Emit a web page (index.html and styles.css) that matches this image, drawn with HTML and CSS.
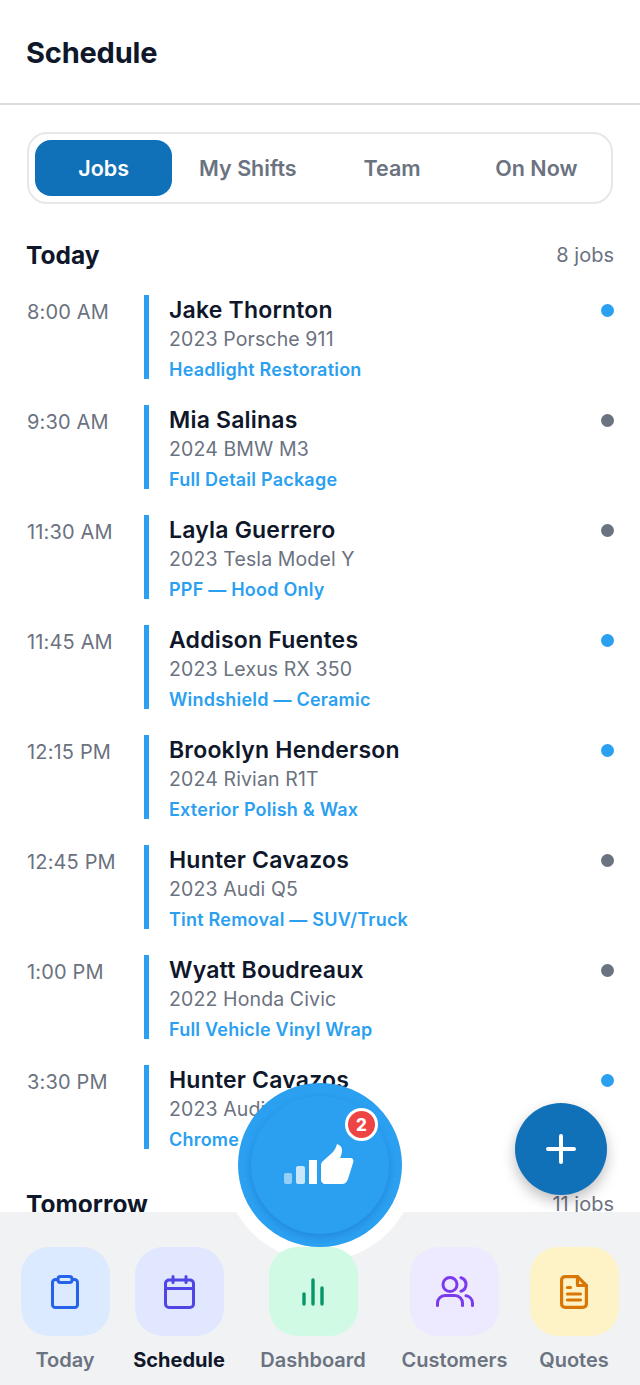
FILE: index.html
```html
<!DOCTYPE html>
<html lang="en">
<head>
  <meta charset="UTF-8">
  <title>Schedule</title>
  <link rel="stylesheet" href="styles.css">
</head>
<body>
  <div class="app">
    <header class="topbar">
      <h1>Schedule</h1>
    </header>

    <main class="content">
      <div class="tabs">
        <div class="tab active">Jobs</div>
        <div class="tab">My Shifts</div>
        <div class="tab">Team</div>
        <div class="tab">On Now</div>
      </div>

      <div class="day-head">
        <h2>Today</h2>
        <span>8 jobs</span>
      </div>

      <div class="job">
        <div class="time">8:00 AM</div>
        <div class="info">
          <div class="name">Jake Thornton</div>
          <div class="car">2023 Porsche 911</div>
          <div class="service">Headlight Restoration</div>
        </div>
        <div class="dot blue"></div>
      </div>
      <div class="job">
        <div class="time">9:30 AM</div>
        <div class="info">
          <div class="name">Mia Salinas</div>
          <div class="car">2024 BMW M3</div>
          <div class="service">Full Detail Package</div>
        </div>
        <div class="dot gray"></div>
      </div>
      <div class="job">
        <div class="time">11:30 AM</div>
        <div class="info">
          <div class="name">Layla Guerrero</div>
          <div class="car">2023 Tesla Model Y</div>
          <div class="service">PPF — Hood Only</div>
        </div>
        <div class="dot gray"></div>
      </div>
      <div class="job">
        <div class="time">11:45 AM</div>
        <div class="info">
          <div class="name">Addison Fuentes</div>
          <div class="car">2023 Lexus RX 350</div>
          <div class="service">Windshield — Ceramic</div>
        </div>
        <div class="dot blue"></div>
      </div>
      <div class="job">
        <div class="time">12:15 PM</div>
        <div class="info">
          <div class="name">Brooklyn Henderson</div>
          <div class="car">2024 Rivian R1T</div>
          <div class="service">Exterior Polish &amp; Wax</div>
        </div>
        <div class="dot blue"></div>
      </div>
      <div class="job">
        <div class="time">12:45 PM</div>
        <div class="info">
          <div class="name">Hunter Cavazos</div>
          <div class="car">2023 Audi Q5</div>
          <div class="service">Tint Removal — SUV/Truck</div>
        </div>
        <div class="dot gray"></div>
      </div>
      <div class="job">
        <div class="time">1:00 PM</div>
        <div class="info">
          <div class="name">Wyatt Boudreaux</div>
          <div class="car">2022 Honda Civic</div>
          <div class="service">Full Vehicle Vinyl Wrap</div>
        </div>
        <div class="dot gray"></div>
      </div>
      <div class="job">
        <div class="time">3:30 PM</div>
        <div class="info">
          <div class="name">Hunter Cavazos</div>
          <div class="car">2023 Audi Q7</div>
          <div class="service">Chrome Delete</div>
        </div>
        <div class="dot blue"></div>
      </div>

      <div class="day-head tomorrow">
        <h2>Tomorrow</h2>
        <span>11 jobs</span>
      </div>
    </main>

    <nav class="bottom-nav">
      <div class="nav-item">
        <div class="tile tile-today">
          <svg width="28" height="34" viewBox="0 0 28 34" fill="none" stroke="#2563eb" stroke-width="3" stroke-linejoin="round">
            <path d="M7 4.500H4.500a3 3 0 0 0-3 3v21.500a3 3 0 0 0 3 3.500h19a3 3 0 0 0 3-3.500V7.500a3 3 0 0 0-3-3H21"/>
            <rect x="7" y="1.500" width="14" height="6" rx="2.500"/>
          </svg>
        </div>
        <span>Today</span>
      </div>
      <div class="nav-item current">
        <div class="tile tile-schedule">
          <svg width="31" height="34" viewBox="0 0 31 34" fill="none" stroke="#4f46e5" stroke-width="3" stroke-linecap="round" stroke-linejoin="round">
            <rect x="1.500" y="5" width="28" height="27.500" rx="3.500"/>
            <path d="M1.500 13.500h28M9 1.500v6M22 1.500v6"/>
          </svg>
        </div>
        <span>Schedule</span>
      </div>
      <div class="nav-item">
        <div class="tile tile-dash">
          <svg width="22" height="28" viewBox="0 0 22 28" fill="none" stroke="#059669" stroke-width="3.400" stroke-linecap="round">
            <path d="M2 16v10M11 2v24M20 10v16"/>
          </svg>
        </div>
        <span>Dashboard</span>
      </div>
      <div class="nav-item">
        <div class="tile tile-cust">
          <svg width="38" height="31" viewBox="0 0 38 31" fill="none" stroke="#7c3aed" stroke-width="3" stroke-linecap="round">
            <circle cx="14" cy="8.500" r="7"/>
            <path d="M25 1.800a7 7 0 0 1 0 13.400"/>
            <path d="M1.500 29.500v-2.500a7.500 7.500 0 0 1 7.500-7.500h10a7.500 7.500 0 0 1 7.500 7.500v2.500"/>
            <path d="M30 19.800a7.500 7.500 0 0 1 6.500 7.200v2.500"/>
          </svg>
        </div>
        <span>Customers</span>
      </div>
      <div class="nav-item">
        <div class="tile tile-quotes">
          <svg width="28" height="34" viewBox="0 0 28 34" fill="none" stroke="#d97706" stroke-width="3.200" stroke-linecap="round" stroke-linejoin="round">
            <path d="M17.500 1.600H5A3.400 3.400 0 0 0 1.600 5v24A3.400 3.400 0 0 0 5 32.400h18a3.400 3.400 0 0 0 3.400-3.400V10.500z"/>
            <path d="M17.500 1.600v8.900h8.900"/>
            <path d="M7.500 12.500h3M7.500 19h13M7.500 25h13"/>
          </svg>
        </div>
        <span>Quotes</span>
      </div>
    </nav>

    <button class="fab" type="button">
      <svg width="30" height="30" viewBox="0 0 30 30" fill="none" stroke="#fff" stroke-width="4" stroke-linecap="round">
        <path d="M15 2v26M2 15h26"/>
      </svg>
    </button>

    <div class="hub">
      <div class="hub-inner">
        <svg width="70" height="41" viewBox="0 0 70 41" fill="#fff">
          <rect x="0" y="29" width="8" height="11" rx="2" opacity="0.5"/>
          <rect x="12" y="22" width="9" height="18" rx="2" opacity="0.75"/>
          <rect x="25" y="16" width="8" height="24"/>
          <path d="M37 21c0-2 1-3 2-4l9-8c2-2 4-5 5-9 3 1 5 3 5 6 0 3-1 6-2 8h10c3 0 4 2 3 5l-5 16c-1 3-3 5-6 5H41c-2 0-4-2-4-4z"/>
        </svg>
        <div class="badge">2</div>
      </div>
    </div>
  </div>
</body>
</html>
```
FILE: styles.css
```css
* {
  box-sizing: border-box;
}

body {
  margin: 0;
  font-family: Inter, "Liberation Sans", sans-serif;
  background: #fff;
  color: #0f172a;
}

.app {
  position: relative;
  width: 640px;
  height: 1385px;
  display: flex;
  flex-direction: column;
  overflow: hidden;
}

.topbar {
  height: 105px;
  flex: none;
  padding: 0 26px;
  display: flex;
  align-items: center;
  border-bottom: 2px solid #d9dbdf;
}

.topbar h1 {
  margin: 2px 0 0;
  font-size: 29px;
  font-weight: 700;
  letter-spacing: -0.2px;
}

.content {
  flex: 1;
  min-height: 0;
  overflow: hidden;
  padding: 27px 26px 0;
}

.tabs {
  height: 72px;
  margin: 0 1px;
  padding: 6px 6px;
  display: grid;
  grid-template-columns: repeat(4, 1fr);
  gap: 7px;
  border: 2px solid #e5e7eb;
  border-radius: 20px;
}

.tab {
  display: flex;
  align-items: center;
  justify-content: center;
  border-radius: 16px;
  font-size: 21.5px;
  font-weight: 600;
  color: #6b7280;
}

.tab.active {
  background: #1071b8;
  color: #fff;
}

.day-head {
  display: flex;
  justify-content: space-between;
  align-items: center;
  height: 36px;
  margin-top: 33px;
  margin-bottom: 22px;
}

.day-head h2 {
  margin: 0;
  font-size: 24.5px;
  font-weight: 700;
}

.day-head span {
  font-size: 20px;
  color: #6b7280;
}

.job {
  display: flex;
  height: 84px;
  margin-bottom: 26px;
}

.time {
  width: 118px;
  flex: none;
  padding: 5px 0 0 1px;
  font-size: 20px;
  letter-spacing: 0.15px;
  line-height: 25px;
  color: #6b7280;
}

.info {
  flex: 1;
  padding-left: 20px;
  border-left: 5px solid #2b9ff0;
}

.name {
  font-size: 23px;
  letter-spacing: 0.2px;
  line-height: 30px;
  font-weight: 600;
}

.car {
  font-size: 19.5px;
  letter-spacing: 0.12px;
  line-height: 28px;
  color: #6b7280;
}

.service {
  margin-top: 4px;
  font-size: 18px;
  letter-spacing: 0.22px;
  line-height: 26px;
  font-weight: 600;
  color: #2b9ff0;
}

.dot {
  width: 13px;
  height: 13px;
  margin-top: 9px;
  border-radius: 50%;
}

.dot.blue {
  background: #2b9ff0;
}

.dot.gray {
  background: #6b7280;
}

/* collapses with the last job's bottom margin */
.tomorrow {
  margin-top: 37px;
}

.bottom-nav {
  position: relative;
  flex: none;
  height: 173px;
  padding: 35px 0 0 9px;
  display: grid;
  grid-template-columns: 112px 116px 152px 131px 108px;
  background: #f1f2f4;
  overflow: hidden;
}

/* white cut-out round the big button, the tiles sit on top of it */
.bottom-nav::before {
  content: "";
  position: absolute;
  left: 224px;
  top: -143px;
  width: 192px;
  height: 192px;
  border-radius: 50%;
  background: #fff;
}

.nav-item {
  position: relative;
  display: flex;
  flex-direction: column;
  align-items: center;
  font-size: 20px;
  font-weight: 600;
  color: #6b7280;
  white-space: nowrap;
}

.nav-item.current {
  color: #0f172a;
  font-weight: 700;
}

.nav-item span {
  margin-top: 12px;
  line-height: 24px;
}

.tile {
  width: 89px;
  height: 89px;
  border-radius: 28px;
  display: flex;
  align-items: center;
  justify-content: center;
}

.tile-today {
  background: #dbeafe;
}

.tile-schedule {
  background: #e0e7ff;
}

.tile-dash {
  background: #d1fae5;
}

.tile-cust {
  background: #ede9fe;
}

.tile-quotes {
  background: #fef3c7;
}

.fab {
  position: absolute;
  left: 515px;
  top: 1103px;
  width: 92px;
  height: 92px;
  padding: 0;
  border: none;
  border-radius: 50%;
  background: #1071b8;
  display: flex;
  align-items: center;
  justify-content: center;
  box-shadow: 0 6px 14px rgba(0, 0, 0, 0.25);
}

.hub {
  position: absolute;
  left: 238px;
  top: 1083px;
  width: 164px;
  height: 164px;
  padding: 13px;
  border-radius: 50%;
  background: #2b9ff0;
}

.hub-inner {
  position: relative;
  width: 138px;
  height: 138px;
  border-radius: 50%;
  background: #2b9ff0;
  box-shadow: 0 3px 6px rgba(16, 90, 170, 0.3);
  display: flex;
  align-items: center;
  justify-content: center;
}

.hub-inner svg {
  margin: -2px 3px 0 0;
}

.badge {
  position: absolute;
  right: 11px;
  top: 12px;
  width: 33px;
  height: 33px;
  border: 3px solid #fff;
  border-radius: 50%;
  background: #ef4444;
  color: #fff;
  font-size: 17px;
  font-weight: 800;
  display: flex;
  align-items: center;
  justify-content: center;
}
```
